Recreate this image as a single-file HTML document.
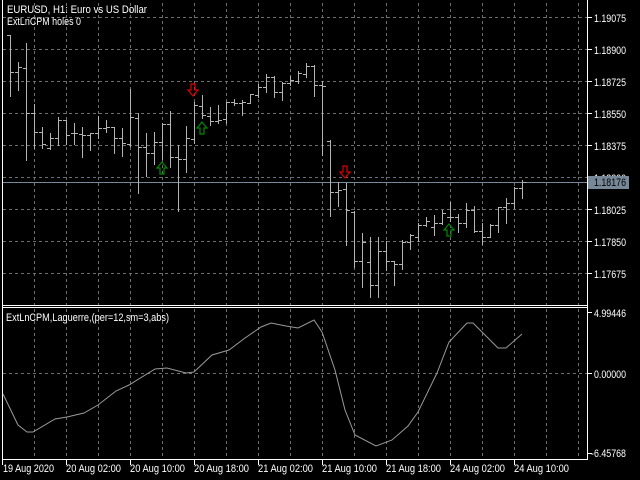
<!DOCTYPE html>
<html><head><meta charset="utf-8"><style>
html,body{margin:0;padding:0;background:#000;width:640px;height:480px;overflow:hidden}
svg{display:block}
text{font-family:"Liberation Sans",sans-serif;font-size:11px;fill:#fff}
text.dk{fill:#000}
</style></head><body>
<svg width="640" height="480" viewBox="0 0 640 480" xmlns="http://www.w3.org/2000/svg" shape-rendering="crispEdges">
<rect width="640" height="480" fill="#000"/>
<g stroke="#6e6e6e" stroke-width="1" stroke-dasharray="3,3">
<path d="M34.5 3V305M66.5 3V305M98.5 3V305M130.5 3V305M162.5 3V305M194.5 3V305M226.5 3V305M258.5 3V305M290.5 3V305M322.5 3V305M354.5 3V305M386.5 3V305M418.5 3V305M450.5 3V305M482.5 3V305M514.5 3V305M546.5 3V305M578.5 3V305"/>
<path d="M3 17.5H587M3 49.5H587M3 81.5H587M3 113.5H587M3 145.5H587M3 177.5H587M3 209.5H587M3 241.5H587M3 273.5H587"/>
<path d="M34.5 309V459M66.5 309V459M98.5 309V459M130.5 309V459M162.5 309V459M194.5 309V459M226.5 309V459M258.5 309V459M290.5 309V459M322.5 309V459M354.5 309V459M386.5 309V459M418.5 309V459M450.5 309V459M482.5 309V459M514.5 309V459M546.5 309V459M578.5 309V459"/>
<path d="M3 373.5H587"/>
</g>
<g stroke="#fff" stroke-width="1" fill="none">
<path d="M2.5 0V460M587.5 0V460M2 305.5H588M2 307.5H588M2 459.5H588"/>
<path d="M587 17.5h5M587 49.5h5M587 81.5h5M587 113.5h5M587 145.5h5M587 177.5h5M587 209.5h5M587 241.5h5M587 273.5h5M587 312.5h5M587 373.5h5M587 453.5h5"/>
<path d="M2.5 460v5M66.5 460v5M130.5 460v5M194.5 460v5M258.5 460v5M322.5 460v5M386.5 460v5M450.5 460v5M514.5 460v5"/>
</g>
<path d="M3 182.5H587" stroke="#778899" stroke-width="1"/>
<g id="bars" stroke="#b4b4b4" stroke-width="1" fill="none"></g>
<g fill="none" stroke-width="1.2" shape-rendering="auto">
<path d="M191 84h4v6h3l-5 6l-5-6h3z" stroke="#e00000"/>
<path d="M343 166h4v6h3l-5 6l-5-6h3z" stroke="#e00000"/>
<path d="M160 174h4v-6h3l-5-6l-5 6h3z" stroke="#008a00"/>
<path d="M200 134h4v-6h3l-5-6l-5 6h3z" stroke="#008a00"/>
<path d="M447 236h4v-6h3l-5-6l-5 6h3z" stroke="#008a00"/>
</g>
<polyline shape-rendering="auto" fill="none" stroke="#9a9a9a" stroke-width="1" points="3,394 18,425 27,432 33,432 55,419 67,417 84,413 98,405 116,391 129,385 155,369 167,368 186,373 194,372 212,355 229,350 245,338 261,327 271,323 286,326 298,328 314,320 322,332 335,370 345,410 355,435 376,446 392,440 408,426 418,412 437,373 449,342 467,323 473,323 498,348 506,348 522,334"/>
<text x="7" y="13" textLength="140" lengthAdjust="spacingAndGlyphs">EURUSD, H1:  Euro vs US Dollar</text>
<text x="7" y="25" textLength="74" lengthAdjust="spacingAndGlyphs">ExtLnCPM holes 0</text>
<text x="6" y="321" textLength="163" lengthAdjust="spacingAndGlyphs">ExtLnCPM,Laguerre,(per=12,sm=3,abs)</text>
<g>
<text x="594" y="22" textLength="32" lengthAdjust="spacingAndGlyphs">1.19075</text><text x="594" y="54" textLength="32" lengthAdjust="spacingAndGlyphs">1.18900</text><text x="594" y="86" textLength="32" lengthAdjust="spacingAndGlyphs">1.18725</text><text x="594" y="118" textLength="32" lengthAdjust="spacingAndGlyphs">1.18550</text><text x="594" y="150" textLength="32" lengthAdjust="spacingAndGlyphs">1.18375</text><text x="594" y="182" textLength="32" lengthAdjust="spacingAndGlyphs">1.18200</text><text x="594" y="214" textLength="32" lengthAdjust="spacingAndGlyphs">1.18025</text><text x="594" y="246" textLength="32" lengthAdjust="spacingAndGlyphs">1.17850</text><text x="594" y="278" textLength="32" lengthAdjust="spacingAndGlyphs">1.17675</text>
<text x="594" y="317" textLength="32" lengthAdjust="spacingAndGlyphs">4.99446</text><text x="594" y="378" textLength="32" lengthAdjust="spacingAndGlyphs">0.00000</text><text x="591" y="457" textLength="35" lengthAdjust="spacingAndGlyphs">-6.45768</text>
</g>
<rect x="588" y="176" width="41" height="13" fill="#778899"/>
<text class="dk" x="594" y="186" textLength="32" lengthAdjust="spacingAndGlyphs">1.18176</text>
<g>
<text x="3" y="472" textLength="51" lengthAdjust="spacingAndGlyphs">19 Aug 2020</text><text x="66" y="472" textLength="55" lengthAdjust="spacingAndGlyphs">20 Aug 02:00</text><text x="130" y="472" textLength="55" lengthAdjust="spacingAndGlyphs">20 Aug 10:00</text><text x="194" y="472" textLength="55" lengthAdjust="spacingAndGlyphs">20 Aug 18:00</text><text x="258" y="472" textLength="55" lengthAdjust="spacingAndGlyphs">21 Aug 02:00</text><text x="322" y="472" textLength="55" lengthAdjust="spacingAndGlyphs">21 Aug 10:00</text><text x="386" y="472" textLength="55" lengthAdjust="spacingAndGlyphs">21 Aug 18:00</text><text x="450" y="472" textLength="55" lengthAdjust="spacingAndGlyphs">24 Aug 02:00</text><text x="514" y="472" textLength="55" lengthAdjust="spacingAndGlyphs">24 Aug 10:00</text>
</g>
</svg>
<script>
var d=[[10,35,96,35,72],[18,62,90,72,67],[26,43,160,68,113],[34,104,148,113,132],[42,127,148,132,144],[50,133,149,148,138],[58,117,145,138,120],[66,120,144,120,135],[74,123,144,133,133],[82,127,157,134,135],[90,133,150,135,133],[98,116,138,133,128],[106,120,132,128,127],[114,127,153,127,138],[122,128,156,138,143],[130,89,146,144,117],[138,113,193,118,147],[146,133,176,147,153],[154,132,164,153,142],[162,123,159,142,124],[170,111,167,124,157],[178,145,211,157,159],[186,126,172,159,138],[194,102,143,139,105],[202,95,118,106,115],[210,107,125,116,121],[218,105,123,121,120],[226,102,123,119,102],[234,99,105,102,103],[242,100,115,103,102],[250,94,103,103,94],[258,84,97,95,87],[266,74,92,87,77],[274,76,97,77,92],[282,82,100,92,83],[290,76,85,83,80],[298,71,83,81,73],[306,63,77,74,66],[314,65,96,66,85],[322,81,155,85,86],[330,140,216,141,192],[338,182,206,192,190],[346,183,245,189,210],[354,211,267,212,261],[362,233,287,261,242],[370,237,297,262,285],[378,237,297,285,251],[386,241,270,251,261],[394,261,285,261,264],[402,240,269,264,242],[410,234,249,242,235],[418,223,241,237,225],[426,217,226,225,221],[434,215,235,227,223],[442,210,224,223,213],[450,202,221,217,217],[458,214,232,217,223],[466,203,227,223,210],[474,206,232,210,231],[482,223,244,231,237],[490,224,237,237,225],[498,207,232,225,207],[506,198,223,207,203],[514,187,208,203,188],[522,180,198,188,182]];
var s='';d.forEach(function(b){var x=b[0]+.5;s+='M'+x+' '+b[1]+'V'+(b[2]+1)+'M'+(b[0]-3)+' '+(b[3]+.5)+'H'+b[0]+'M'+(b[0]+1)+' '+(b[4]+.5)+'H'+(b[0]+4);});
var p=document.createElementNS('http://www.w3.org/2000/svg','path');p.setAttribute('d',s);document.getElementById('bars').appendChild(p);
</script>
</body></html>
